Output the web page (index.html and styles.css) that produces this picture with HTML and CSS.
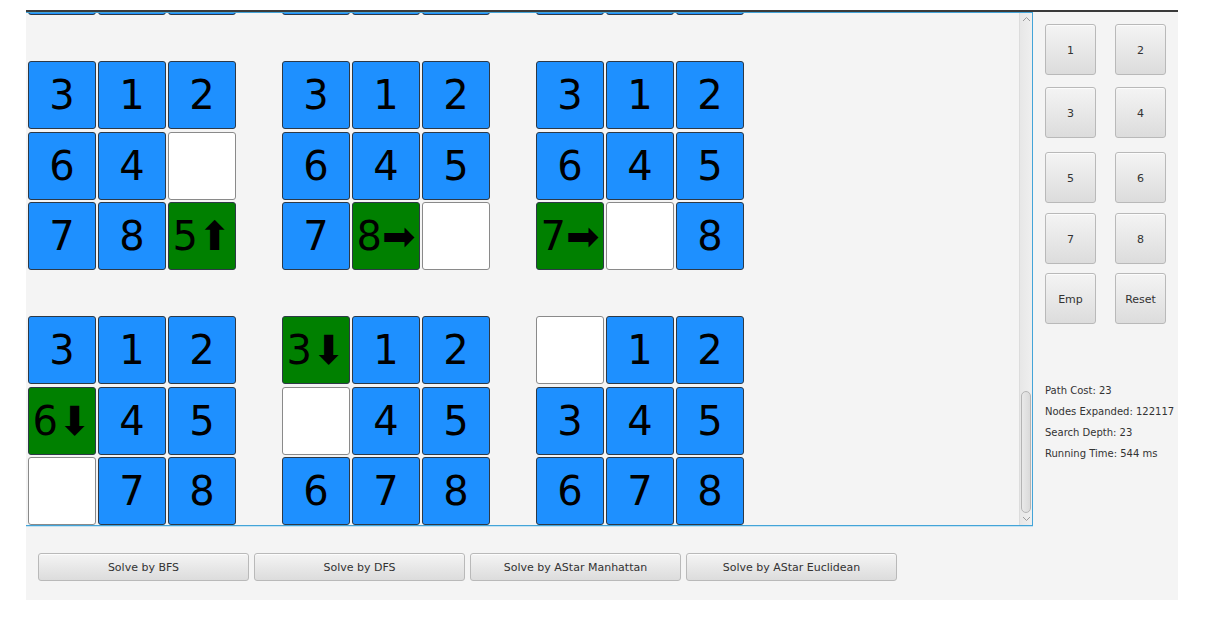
FILE: index.html
```html
<!DOCTYPE html>
<html>
<head>
<meta charset="utf-8">
<title>8 Puzzle Solver</title>
<link rel="stylesheet" href="styles.css">
</head>
<body>
<div class="window">
  <div class="main">
    <div class="scroll">
      <div class="viewport">
        <div class="boards">
          <div class="board">
            <div class="tile empty"></div><div class="tile move">3⬅</div><div class="tile">2</div>
            <div class="tile">6</div><div class="tile">1</div><div class="tile">4</div>
            <div class="tile">7</div><div class="tile">8</div><div class="tile">5</div>
          </div>
          <div class="board">
            <div class="tile">3</div><div class="tile empty"></div><div class="tile">2</div>
            <div class="tile">6</div><div class="tile move">1⬆</div><div class="tile">4</div>
            <div class="tile">7</div><div class="tile">8</div><div class="tile">5</div>
          </div>
          <div class="board">
            <div class="tile">3</div><div class="tile">1</div><div class="tile">2</div>
            <div class="tile">6</div><div class="tile empty"></div><div class="tile move">4⬅</div>
            <div class="tile">7</div><div class="tile">8</div><div class="tile">5</div>
          </div>

          <div class="board">
            <div class="tile">3</div><div class="tile">1</div><div class="tile">2</div>
            <div class="tile">6</div><div class="tile">4</div><div class="tile empty"></div>
            <div class="tile">7</div><div class="tile">8</div><div class="tile move">5⬆</div>
          </div>
          <div class="board">
            <div class="tile">3</div><div class="tile">1</div><div class="tile">2</div>
            <div class="tile">6</div><div class="tile">4</div><div class="tile">5</div>
            <div class="tile">7</div><div class="tile move">8➡</div><div class="tile empty"></div>
          </div>
          <div class="board">
            <div class="tile">3</div><div class="tile">1</div><div class="tile">2</div>
            <div class="tile">6</div><div class="tile">4</div><div class="tile">5</div>
            <div class="tile move">7➡</div><div class="tile empty"></div><div class="tile">8</div>
          </div>

          <div class="board">
            <div class="tile">3</div><div class="tile">1</div><div class="tile">2</div>
            <div class="tile move">6⬇</div><div class="tile">4</div><div class="tile">5</div>
            <div class="tile empty"></div><div class="tile">7</div><div class="tile">8</div>
          </div>
          <div class="board">
            <div class="tile move">3⬇</div><div class="tile">1</div><div class="tile">2</div>
            <div class="tile empty"></div><div class="tile">4</div><div class="tile">5</div>
            <div class="tile">6</div><div class="tile">7</div><div class="tile">8</div>
          </div>
          <div class="board">
            <div class="tile empty"></div><div class="tile">1</div><div class="tile">2</div>
            <div class="tile">3</div><div class="tile">4</div><div class="tile">5</div>
            <div class="tile">6</div><div class="tile">7</div><div class="tile">8</div>
          </div>
        </div>
      </div>
      <div class="vbar">
        <div class="arrow arrow-up">
          <svg width="9" height="6" viewBox="0 0 9 6"><path d="M1 5 L4.5 1.5 L8 5" fill="none" stroke="#9c9c9c" stroke-width="1"/></svg>
        </div>
        <div class="track"><div class="thumb"></div></div>
        <div class="arrow arrow-down">
          <svg width="9" height="6" viewBox="0 0 9 6"><path d="M1 1 L4.5 4.5 L8 1" fill="none" stroke="#9c9c9c" stroke-width="1"/></svg>
        </div>
      </div>
    </div>
    <div class="actions">
      <button class="btn wide">Solve by BFS</button>
      <button class="btn wide">Solve by DFS</button>
      <button class="btn wide">Solve by AStar Manhattan</button>
      <button class="btn wide">Solve by AStar Euclidean</button>
    </div>
  </div>
  <div class="side">
    <div class="keyrow r1"><button class="btn key">1</button><button class="btn key">2</button></div>
    <div class="keyrow r2"><button class="btn key">3</button><button class="btn key">4</button></div>
    <div class="keyrow r3"><button class="btn key">5</button><button class="btn key">6</button></div>
    <div class="keyrow r4"><button class="btn key">7</button><button class="btn key">8</button></div>
    <div class="keyrow r5"><button class="btn key">Emp</button><button class="btn key">Reset</button></div>
    <div class="stats">
      <div>Path Cost: 23</div>
      <div>Nodes Expanded: 122117</div>
      <div>Search Depth: 23</div>
      <div>Running Time: 544 ms</div>
    </div>
  </div>
</div>
</body>
</html>
```
FILE: styles.css
```css
body {
  margin: 0;
  background: #ffffff;
  font-family: "DejaVu Sans", "Liberation Sans", sans-serif;
}

.window {
  margin: 10px 0 0 26px;
  width: 1152px;
  height: 590px;
  box-sizing: border-box;
  border-top: 2px solid #3a3a3a;
  background: #f4f4f4;
  display: flex;
}

.main {
  width: 1007px;
  display: flex;
  flex-direction: column;
}

.scroll {
  height: 514px;
  box-sizing: border-box;
  border: 1px solid #43a4d8;
  border-left: none;
  box-shadow: 0 1px 0 #c4e2f1;
  display: flex;
}

.viewport {
  flex: 1;
  overflow: hidden;
}

.boards {
  display: grid;
  grid-template-columns: repeat(3, 208px);
  column-gap: 46px;
  row-gap: 46px;
  margin: -207px 0 0 2px;
}

.board {
  display: grid;
  grid-template-columns: repeat(3, 68px);
  grid-auto-rows: 68px;
  column-gap: 2px;
  row-gap: 2.5px;
}

.tile {
  box-sizing: border-box;
  border: 1px solid #2d3946;
  border-radius: 3px;
  background: #1e90ff;
  display: flex;
  align-items: center;
  justify-content: center;
  font-family: "DejaVu Sans", sans-serif;
  font-size: 40px;
  line-height: 1;
  color: #000;
}

.tile.move {
  background: #008000;
}

.tile.empty {
  background: #ffffff;
  border-color: #8a8a8a;
}

.vbar {
  width: 13px;
  box-sizing: border-box;
  border-left: 1px solid #dcdcdc;
  background: linear-gradient(to right, #e7e7e7, #efefef);
  display: flex;
  flex-direction: column;
}

.arrow {
  height: 12px;
  display: flex;
  align-items: center;
  justify-content: center;
}

.track {
  flex: 1;
  padding: 0 1px 0 1px;
  display: flex;
  flex-direction: column;
  justify-content: flex-end;
}

.thumb {
  height: 122px;
  box-sizing: border-box;
  border: 1px solid #b4b4b4;
  border-radius: 5px;
  background: linear-gradient(to right, #e9e9e9, #dadada);
}

.actions {
  display: flex;
  gap: 5px;
  padding: 27px 0 0 12px;
}

.btn {
  font-family: "DejaVu Sans", sans-serif;
  font-size: 11px;
  color: #333;
  background: linear-gradient(#f4f4f4, #dcdcdc);
  border: 1px solid #b9b9b9;
  border-radius: 3px;
  padding: 0;
  box-shadow: inset 0 1px 0 rgba(255, 255, 255, 0.7);
  box-sizing: border-box;
}

.btn.wide {
  width: 211px;
  height: 28px;
  padding-top: 1px;
}

.side {
  flex: 1;
  padding-left: 12px;
}

.keyrow {
  display: flex;
  gap: 19px;
}

.keyrow.r1 { margin-top: 12px; }
.keyrow.r2 { margin-top: 12px; }
.keyrow.r3 { margin-top: 14px; }
.keyrow.r4 { margin-top: 10px; }
.keyrow.r5 { margin-top: 9px; }

.btn.key {
  width: 51px;
  height: 51px;
  padding-top: 1px;
}

.stats {
  margin-top: 56px;
  font-size: 10px;
  line-height: 21px;
  color: #333;
  white-space: nowrap;
}
```
